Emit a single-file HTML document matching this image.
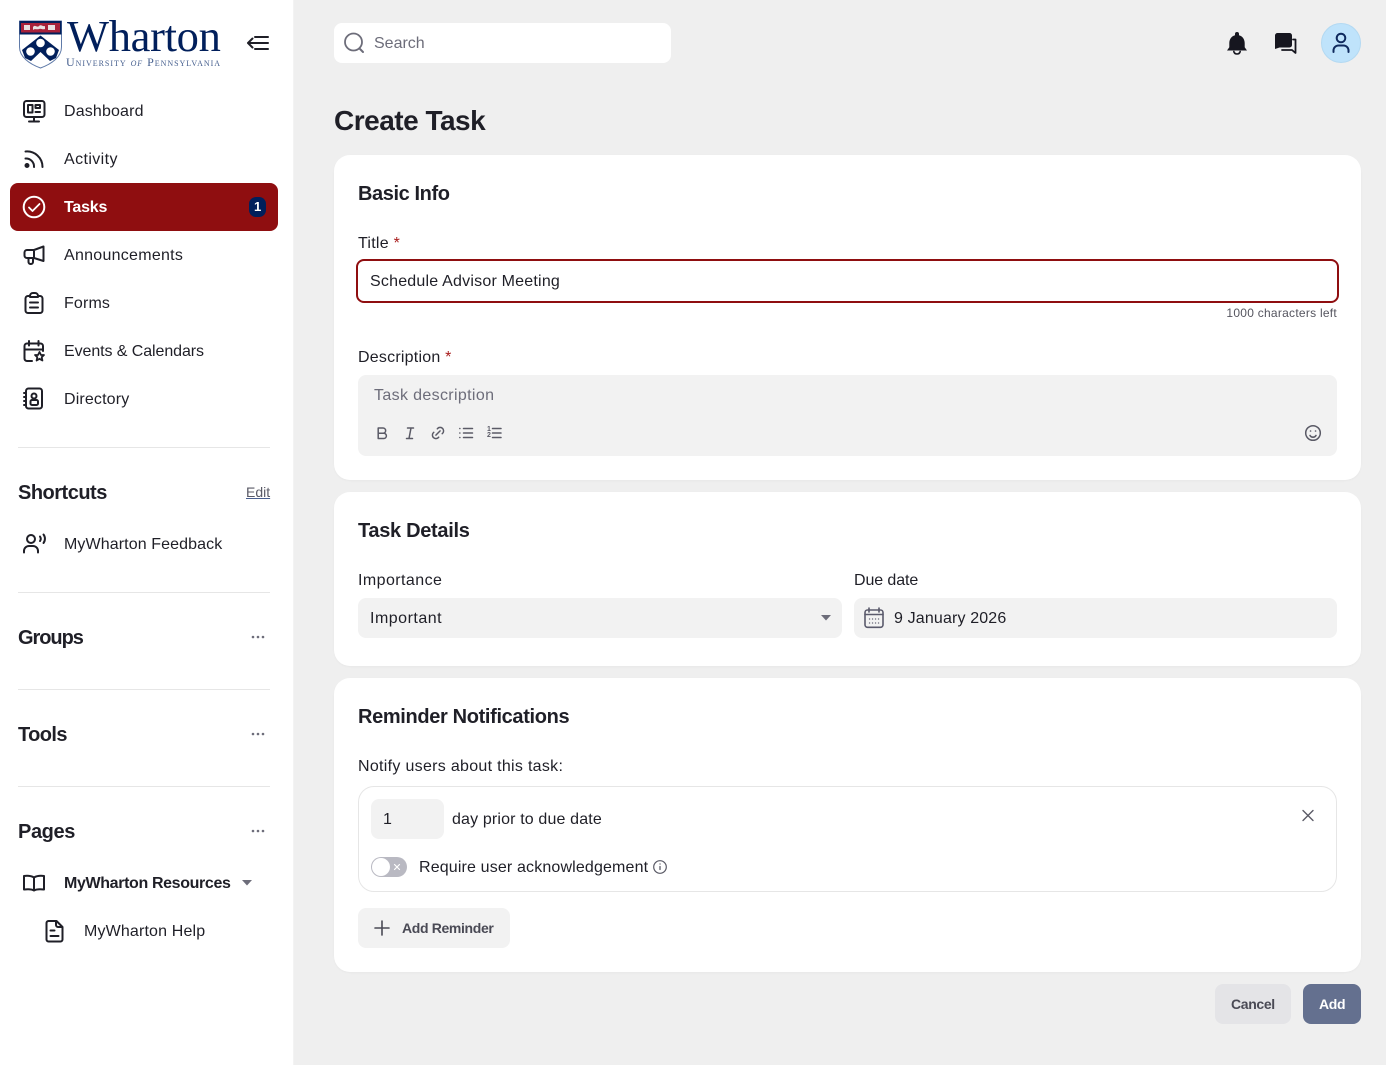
<!DOCTYPE html>
<html lang="en"><head><meta charset="utf-8"><title>Create Task</title>
<style>
html,body{margin:0;padding:0;width:1386px;height:1065px;overflow:hidden;background:#efefef}
body{position:relative;font-family:"Liberation Sans",sans-serif;color:#1f1f27;font-size:16px}
.b{position:absolute;box-sizing:border-box}
.t{position:absolute;line-height:24px;height:24px;white-space:nowrap;letter-spacing:.15px}
.h{font-weight:700;font-size:20px;letter-spacing:-.4px}
.card{background:#fff;border-radius:16px;left:334px;width:1027px;box-shadow:0 1px 2px rgba(0,0,0,.03)}
.div{left:18px;width:252px;height:1px;background:#e6e6e6}
.f{background:#f2f2f2;border-radius:8px}
.g{color:#6d6d7a}
svg{position:absolute;left:0;top:0}
</style></head><body>
<div class="b" style="left:0;top:0;width:294px;height:1065px;background:#fff;border-right:1px solid #f3f3f3"></div>
<div class="b" style="left:10px;top:183px;width:268px;height:48px;background:#8f0e10;border-radius:8px"></div>
<div class="b" style="left:249px;top:197px;width:17px;height:20px;background:#011f5b;border-radius:7px"></div>
<div class="b div" style="top:447px"></div><div class="b div" style="top:592px"></div><div class="b div" style="top:689px"></div><div class="b div" style="top:786px"></div>
<div class="b" style="left:334px;top:23px;width:337px;height:40px;background:#fff;border-radius:8px"></div>
<div class="b" style="left:1321px;top:23px;width:40px;height:40px;background:#bfe3fb;border-radius:50%;border:1px solid #b3d9f2"></div>
<div class="b card" style="top:155px;height:325px"></div>
<div class="b card" style="top:492px;height:174px"></div>
<div class="b card" style="top:678px;height:294px"></div>
<div class="b" style="left:356px;top:259px;width:983px;height:44px;border:2px solid #8f0e10;border-radius:8px"></div>
<div class="b f" style="left:358px;top:375px;width:979px;height:81px"></div>
<div class="b f" style="left:358px;top:598px;width:484px;height:40px"></div>
<div class="b f" style="left:854px;top:598px;width:483px;height:40px"></div>
<div class="b" style="left:358px;top:786px;width:979px;height:106px;border:1px solid #e6e6e6;border-radius:16px"></div>
<div class="b f" style="left:371px;top:799px;width:73px;height:40px"></div>
<div class="b" style="left:371px;top:857px;width:36px;height:20px;background:#b9b9c2;border-radius:10px"></div>
<div class="b" style="left:372px;top:858px;width:18px;height:18px;background:#fff;border-radius:50%"></div>
<div class="b f" style="left:358px;top:908px;width:152px;height:40px"></div>
<div class="b" style="left:1215px;top:984px;width:76px;height:40px;background:#e4e4e7;border-radius:8px"></div>
<div class="b" style="left:1303px;top:984px;width:58px;height:40px;background:#64708f;border-radius:8px"></div>

<svg width="1386" height="1065" viewBox="0 0 1386 1065" fill="none" stroke="#1f1f27" stroke-width="2" stroke-linecap="round" stroke-linejoin="round">
<!-- logo -->
<path d="M19.500 21h42v26c0 10-10 17-21 21c-11-4-21-11-21-21z" fill="#fff" stroke="#5f7aa8" stroke-width="1"/>
<rect x="19.500" y="21" width="42" height="13.500" fill="#011f5b" stroke="none"/>
<rect x="21" y="23" width="39" height="9.500" fill="#a8213a" stroke="none"/>
<path d="M24 25h6v5h-6zM33 27c2-3 4 1 6-1s4 1 6 0v3c-3 1-4-1-6 0s-4-1-6 1zM48 25h7v5h-7z" fill="#e8dfe0" stroke="none"/>
<path d="M22 50L40.500 35.500L59 50L56 58L50 61L40.500 52L31 61L25 58z" fill="#011f5b" stroke="none"/>
<circle cx="40.500" cy="43" r="4.300" fill="#fff" stroke="none"/><circle cx="30.500" cy="51.500" r="4.300" fill="#fff" stroke="none"/><circle cx="50.500" cy="51.500" r="4.300" fill="#fff" stroke="none"/>
<!-- collapse -->
<path d="M255 37h13M248 43h20M255 49h13M252.500 38.500L248 43l4.500 4.500" stroke-width="2"/>
<!-- dashboard -->
<rect x="24" y="101" width="20.500" height="16" rx="2.500"/><path d="M34 117v4M29 121.500h10"/><rect x="28" y="105" width="4.500" height="7.500"/><rect x="35.500" y="105" width="4.500" height="3"/><path d="M35.500 112h4.500"/>
<!-- activity -->
<circle cx="27" cy="165.500" r="1.500" fill="#1f1f27"/><path d="M25.500 158.500a8 8 0 0 1 8.500 8.500M25.500 151.500a15.500 15.500 0 0 1 17 15.500"/>
<!-- tasks -->
<circle cx="34" cy="207" r="10.300" stroke="#fff"/><path d="M29 207.500l3.500 3.500l7-7" stroke="#fff" stroke-width="1.800"/>
<!-- announcements -->
<path d="M43.500 246.500L34 250H27a2.500 2.500 0 0 0-2.500 2.500v3A2.500 2.500 0 0 0 27 258h7l9.500 3zM34 250v8M28.500 258v4a2 2 0 0 0 2 2h.5a2 2 0 0 0 2-2v-4" />
<!-- forms -->
<path d="M30 296h-2a2.500 2.500 0 0 0-2.500 2.500v12A2.500 2.500 0 0 0 28 313h12a2.500 2.500 0 0 0 2.500-2.500v-12A2.500 2.500 0 0 0 40 296h-2M30 296a3 3 0 0 1 3-3h2a3 3 0 0 1 3 3v1h-8zM30 302.500h8M30 307.500h8"/>
<!-- events -->
<path d="M32 361h-5a2.500 2.500 0 0 1-2.500-2.500V346a2.500 2.500 0 0 1 2.500-2.500h13.500A2.500 2.500 0 0 1 43 346v5M29 341v4.500M38.500 341v4.500M24.500 349.500H43"/>
<path d="M39.500 352l1.500 3h3l-2.300 2.200l.7 3.300l-2.900-1.700l-2.900 1.700l.7-3.300l-2.300-2.200h3z" stroke-width="1.800"/>
<!-- directory -->
<rect x="26" y="388.500" width="16" height="20" rx="2.500"/><circle cx="34" cy="396" r="2.500"/><rect x="30.500" y="400" width="7.500" height="5" rx="1.500"/><path d="M24 393h1M24 397h1M24 401h1M24 405h1" stroke-width="2"/>
<!-- feedback -->
<circle cx="31" cy="539" r="4"/><path d="M24 552.500v-1.500a5 5 0 0 1 5-5h4a5 5 0 0 1 5 5v1.500M40 536.500a4 4 0 0 1 0 4.500M43.500 534.500a7 7 0 0 1 0 8.500"/>
<!-- dots -->
<g fill="#6d6d7a" stroke="none"><circle cx="253" cy="637" r="1.300"/><circle cx="258" cy="637" r="1.300"/><circle cx="263" cy="637" r="1.300"/><circle cx="253" cy="734" r="1.300"/><circle cx="258" cy="734" r="1.300"/><circle cx="263" cy="734" r="1.300"/><circle cx="253" cy="831" r="1.300"/><circle cx="258" cy="831" r="1.300"/><circle cx="263" cy="831" r="1.300"/>
<path d="M242 880h10l-5 5.500z"/><path d="M821 615h10l-5 5.500z"/></g>
<!-- book -->
<path d="M34 877.500C31.500 876 28 875.500 24 876V889.500C28 889 31.500 889 34 890.500C36.500 889 40 889 44 889.500V876C40 875.500 36.500 876 34 877.500zM34 877.500V890.500"/>
<!-- doc -->
<path d="M48.500 921h8l6 6v12.500a2 2 0 0 1-2 2h-12a2 2 0 0 1-2-2V923a2 2 0 0 1 2-2zM56 921v4a2 2 0 0 0 2 2h4.500M50.500 930.500h4M50.500 936h8"/>
<!-- search -->
<circle cx="353.500" cy="42" r="8.500" stroke="#6d6d7a" stroke-width="1.800"/><path d="M359.500 48.500l3.500 3.500" stroke="#6d6d7a"/>
<!-- bell -->
<path d="M1237 32a2 2 0 0 1 2 2v1.200c3.800 1 5.700 4.300 5.700 8v4l2.300 3.300h-20l2.300-3.300v-4c0-3.700 1.900-7 5.700-8V34a2 2 0 0 1 2-2z" fill="#16161f" stroke="none"/><path d="M1233.800 51.500a3.300 3.300 0 0 0 6.400 0" stroke="#16161f" stroke-width="1.600"/>
<!-- chat -->
<path d="M1277.500 33h12a2.500 2.500 0 0 1 2.500 2.500v9.500a2.500 2.500 0 0 1-2.500 2.500h-10l-4.500 1.500V35.500a2.500 2.500 0 0 1 2.500-2.500z" fill="#16161f" stroke="none"/><path d="M1293 39.500h2.500v13.500l-3.500-3h-10" stroke="#16161f" stroke-width="1.800"/>
<!-- person -->
<circle cx="1341" cy="38" r="4.300" stroke="#0f2a5e" stroke-width="2"/><path d="M1333.500 52v-1.500a5 5 0 0 1 5-5h5a5 5 0 0 1 5 5v1.500" stroke="#0f2a5e" stroke-width="2"/>
<!-- toolbar -->
<g stroke="#5a5a66" stroke-width="1.500">
<path d="M378.200 428h4.800a2.600 2.600 0 0 1 0 5.300h-4.800zM378.200 433.300h5.600a2.600 2.600 0 0 1 0 5.200h-5.600z"/>
<path d="M407.500 428h6M406.500 438.500h6M411 428l-2 10.500"/>
<g transform="translate(429.600 424.600) scale(.7)" stroke-width="2.100"><path d="M9 15l6-6M11 6l.463-.536a5 5 0 0 1 7.071 7.072l-.534.464M13 18l-.397.534a5.068 5.068 0 0 1-7.127 0a4.972 4.972 0 0 1 0-7.071l.524-.463"/></g>
<path d="M463.500 428.500h9M463.500 433h9M463.500 437.500h9M459.800 428.500h.1M459.800 433h.1M459.800 437.500h.1"/>
<path d="M492.500 428.500h8.500M492.500 433h8.500M492.500 437.500h8.500"/>
<circle cx="1313" cy="433" r="7.300"/><path d="M1310 435.500a3.500 3.500 0 0 0 6 0M1310.500 431h.1M1315.500 431h.1" stroke-width="1.600"/>
</g>
<!-- calendar -->
<g stroke="#5a5a6c" stroke-width="1.600"><rect x="865" y="610" width="18" height="17.300" rx="2.500"/><path d="M865 614.500h18M869 608v4M879 608v4"/>
<path d="M869.500 619h.1M872.500 619h.1M875.500 619h.1M878.500 619h.1M869.500 623h.1M872.500 623h.1M875.500 623h.1M878.500 623h.1" stroke-width="1.300"/></g>
<!-- x, info, toggle x, plus -->
<path d="M1303 810.500l10 10M1313 810.500l-10 10" stroke="#5a5a66" stroke-width="1.400"/>
<circle cx="660" cy="867" r="6.300" stroke="#5a5a66" stroke-width="1.200"/><path d="M660 866.500v3M660 864h.1" stroke="#5a5a66" stroke-width="1.300"/>
<path d="M394.500 864.500l5 5M399.500 864.500l-5 5" stroke="#fff" stroke-width="1.200"/>
<path d="M382 921v14M375 928h14" stroke="#4a4a55" stroke-width="1.600"/>
</svg>

<div class="t" style="left:67px;top:10px;font:44.500px/52px 'Liberation Serif',serif;height:52px;letter-spacing:-.3px;color:#011f5b">Wharton</div>
<div class="t" style="left:66px;top:51px;font:12px/22px 'Liberation Serif',serif;height:22px;letter-spacing:.97px;color:#47608f;font-variant:small-caps">University <i>of</i> Pennsylvania</div>

<div class="t" style="left:64px;top:100px">Dashboard</div>
<div class="t" style="left:64px;top:148px;letter-spacing:.4px">Activity</div>
<div class="t" style="left:64px;top:196px;color:#fff;font-weight:700;letter-spacing:-.2px">Tasks</div>
<div class="t" style="left:254px;top:195px;color:#fff;font-weight:700;font-size:13px">1</div>
<div class="t" style="left:64px;top:244px;letter-spacing:.27px">Announcements</div>
<div class="t" style="left:64px;top:292px">Forms</div>
<div class="t" style="left:64px;top:340px;letter-spacing:-.08px">Events &amp; Calendars</div>
<div class="t" style="left:64px;top:388px">Directory</div>
<div class="t h" style="left:18px;top:481px;letter-spacing:-.5px">Shortcuts</div>
<div class="t" style="left:246px;top:480px;font-size:14px;letter-spacing:0;color:#5a5a66;text-decoration:underline;text-decoration-color:#4a5f8f">Edit</div>
<div class="t" style="left:64px;top:533px;letter-spacing:.1px">MyWharton Feedback</div>
<div class="t h" style="left:18px;top:626px;letter-spacing:-1.05px">Groups</div>
<div class="t h" style="left:18px;top:723px;letter-spacing:-.6px">Tools</div>
<div class="t h" style="left:18px;top:820px">Pages</div>
<div class="t" style="left:64px;top:872px;font-weight:700;letter-spacing:-.36px">MyWharton Resources</div>
<div class="t" style="left:84px;top:920px">MyWharton Help</div>

<div class="t g" style="left:374px;top:32px;letter-spacing:0">Search</div>
<div class="t" style="left:334px;top:103px;font-size:28px;line-height:36px;height:36px;font-weight:700;letter-spacing:-.5px">Create Task</div>

<div class="t h" style="left:358px;top:182px">Basic Info</div>
<div class="t" style="left:358px;top:232px;letter-spacing:.25px">Title <span style="color:#a81b1b">*</span></div>
<div class="t" style="left:370px;top:270px;letter-spacing:.21px">Schedule Advisor Meeting</div>
<div class="t" style="right:49px;top:301px;font-size:12px;color:#55555f;letter-spacing:.26px">1000 characters left</div>
<div class="t" style="left:358px;top:346px;letter-spacing:.22px">Description <span style="color:#a81b1b">*</span></div>
<div class="t g" style="left:374px;top:384px;letter-spacing:.35px">Task description</div>
<div style="position:absolute;left:487px;top:427px;font-size:7px;line-height:6px;font-weight:700;color:#5a5a66">1<br>2</div>

<div class="t h" style="left:358px;top:519px;letter-spacing:-.31px">Task Details</div>
<div class="t" style="left:358px;top:569px;letter-spacing:.43px">Importance</div>
<div class="t" style="left:854px;top:569px;letter-spacing:-.1px">Due date</div>
<div class="t" style="left:370px;top:607px;letter-spacing:.5px">Important</div>
<div class="t" style="left:894px;top:607px">9 January 2026</div>

<div class="t h" style="left:358px;top:705px;letter-spacing:-.35px">Reminder Notifications</div>
<div class="t" style="left:358px;top:755px;letter-spacing:.3px">Notify users about this task:</div>
<div class="t" style="left:383px;top:808px">1</div>
<div class="t" style="left:452px;top:808px">day prior to due date</div>
<div class="t" style="left:419px;top:856px">Require user acknowledgement</div>
<div class="t" style="left:402px;top:916px;font-size:14px;font-weight:700;color:#4a4a55;letter-spacing:-.35px">Add Reminder</div>
<div class="t" style="left:1231px;top:992px;font-size:14px;font-weight:700;color:#4a4a55;letter-spacing:-.35px">Cancel</div>
<div class="t" style="left:1319px;top:992px;font-size:14px;font-weight:700;color:#fff;letter-spacing:-.3px">Add</div>
</body></html>
